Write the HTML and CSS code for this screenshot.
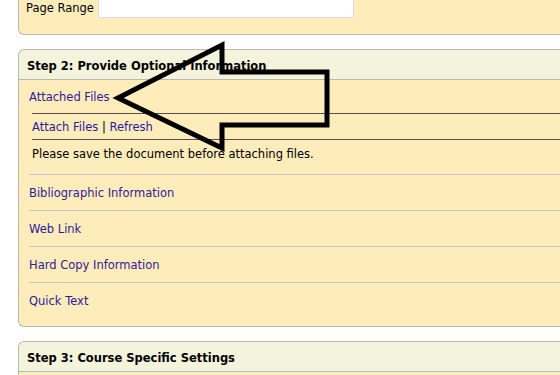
FILE: index.html
```html
<!DOCTYPE html>
<html>
<head>
  <title>Add Item</title>
  <link rel="stylesheet" href="styles.css">
</head>
<body>
  <div class="panel panel-top">
    <div class="field-row">
      <label for="pageRange">Page Range</label>
      <input type="text" id="pageRange" name="pageRange">
    </div>
  </div>

  <div class="panel">
    <div class="panel-head">Step 2: Provide Optional Information</div>
    <div class="panel-body">
      <div class="section attached">
        <a href="#" class="section-link first">Attached Files</a>
        <div class="attach-box">
          <div class="attach-actions">
            <a href="#">Attach Files</a> | <a href="#">Refresh</a>
          </div>
          <div class="attach-note">Please save the document before attaching files.</div>
        </div>
      </div>
      <div class="section"><a href="#" class="section-link">Bibliographic Information</a></div>
      <div class="section"><a href="#" class="section-link">Web Link</a></div>
      <div class="section"><a href="#" class="section-link">Hard Copy Information</a></div>
      <div class="section last"><a href="#" class="section-link">Quick Text</a></div>
    </div>
  </div>

  <div class="panel panel-last">
    <div class="panel-head">Step 3: Course Specific Settings</div>
  </div>

  <svg class="arrow" width="560" height="375" viewBox="0 0 560 375">
    <polygon points="118,98 222,45 222,72 327,72 327,125 222,125 222,148"
             fill="none" stroke="#000" stroke-width="5" stroke-linejoin="miter"/>
  </svg>
</body>
</html>
```

FILE: styles.css
```css
body {
  font-family: "DejaVu Sans", Verdana, sans-serif;
  font-size: 11.5px;
  margin: 0;
  background: #fff;
  color: #000;
  overflow: hidden;
  height: 375px;
}
a {
  color: #2d1b9a;
  text-decoration: none;
}
.panel {
  margin-left: 18px;
  margin-bottom: 14px;
  border: 1px solid #b8b8b8;
  border-right: none;
  border-radius: 6px 0 0 6px;
  background: #feecbb;
}
.panel-top {
  margin-top: -10px;
  border-top: none;
  border-radius: 0 0 0 6px;
}
.panel-last {
  margin-bottom: 0;
  height: 40px;
}
.field-row {
  display: flex;
  align-items: flex-end;
  padding: 0 0 16px 7px;
}
.field-row label {
  width: 72px;
  line-height: 20px;
}
.field-row input {
  width: 256px;
  height: 28px;
  margin: 0;
  padding: 0;
  border: 1px solid #d8dce6;
  background: #fff;
  box-sizing: border-box;
}
.panel-head {
  background: #f4f4dc;
  border-bottom: 1px solid #b8b8b8;
  border-radius: 6px 0 0 0;
  height: 29px;
  line-height: 33px;
  padding-left: 8px;
  font-weight: bold;
}
.panel-body {
  padding-bottom: 8px;
}
.section {
  margin-left: 10px;
  border-bottom: 1px solid #c4c4cc;
}
.section.last {
  border-bottom: none;
}
.section-link {
  display: block;
  height: 35px;
  line-height: 36px;
}
.section-link.first {
  height: 33px;
  line-height: 34px;
}
.attach-box {
  margin-left: 3px;
  border-top: 1px solid #505050;
  padding-bottom: 7px;
}
.attach-actions {
  height: 25px;
  line-height: 26px;
  border-bottom: 1px solid #505050;
}
.attach-note {
  height: 27px;
  line-height: 28px;
}
.arrow {
  position: absolute;
  top: 0;
  left: 0;
  pointer-events: none;
}
```
